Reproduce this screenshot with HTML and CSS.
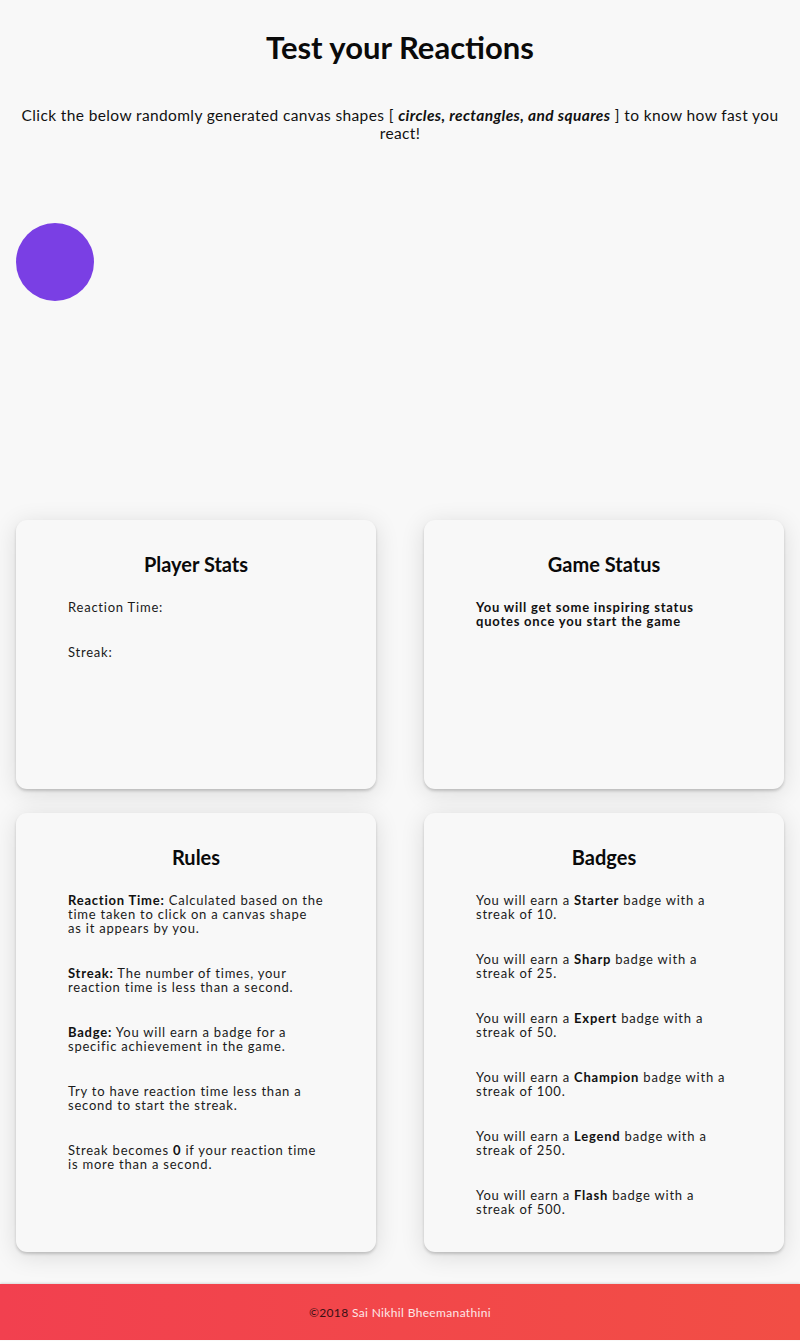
FILE: index.html
```html
<!DOCTYPE html>
<html lang="en">
<head>
<meta charset="utf-8">
<title>Test your Reactions</title>
<link rel="stylesheet" href="styles.css">
</head>
<body>
<header class="intro">
  <h1 class="intro__title">Test your Reactions</h1>
  <p class="intro__text">Click the below randomly generated canvas shapes [ <em>circles, rectangles, and squares</em> ] to know how fast you react!</p>
</header>

<section class="playfield">
  <div class="shape shape--circle"></div>
</section>

<main class="panels">
  <div class="panels__row panels__row--top">
    <article class="card">
      <h2 class="card__title">Player Stats</h2>
      <p class="card__text">Reaction Time:</p>
      <p class="card__text">Streak:</p>
    </article>
    <article class="card">
      <h2 class="card__title">Game Status</h2>
      <p class="card__text card__text--strong">You will get some inspiring status quotes once you start the game</p>
    </article>
  </div>
  <div class="panels__row">
    <article class="card">
      <h2 class="card__title">Rules</h2>
      <p class="card__text"><b>Reaction Time:</b> Calculated based on the time taken to click on a canvas shape as it appears by you.</p>
      <p class="card__text"><b>Streak:</b> The number of times, your reaction time is less than a second.</p>
      <p class="card__text"><b>Badge:</b> You will earn a badge for a specific achievement in the game.</p>
      <p class="card__text">Try to have reaction time less than a second to start the streak.</p>
      <p class="card__text">Streak becomes <b>0</b> if your reaction time is more than a second.</p>
    </article>
    <article class="card">
      <h2 class="card__title">Badges</h2>
      <p class="card__text">You will earn a <b>Starter</b> badge with a streak of 10.</p>
      <p class="card__text">You will earn a <b>Sharp</b> badge with a streak of 25.</p>
      <p class="card__text">You will earn a <b>Expert</b> badge with a streak of 50.</p>
      <p class="card__text">You will earn a <b>Champion</b> badge with a streak of 100.</p>
      <p class="card__text">You will earn a <b>Legend</b> badge with a streak of 250.</p>
      <p class="card__text">You will earn a <b>Flash</b> badge with a streak of 500.</p>
    </article>
  </div>
</main>

<footer class="footer">
  <span class="footer__copy">©2018</span>&nbsp;<span class="footer__name">Sai Nikhil Bheemanathini</span>
</footer>
</body>
</html>
```

FILE: styles.css
```css
* { box-sizing: border-box; }

html, body {
  margin: 0;
  padding: 0;
}

body {
  background: #f8f8f8;
  color: #1a1a1a;
  font-family: "Lato", "Noto Sans", sans-serif;
}

.intro {
  padding: 28px 16px 0;
  text-align: center;
}

.intro__title {
  margin: 0;
  font-size: 31px;
  line-height: 38px;
  font-weight: 700;
  color: #0a0a0a;
}

.intro__text {
  margin: 40px 0 0;
  font-size: 15.5px;
  line-height: 18px;
  letter-spacing: 0.38px;
  color: #111;
}

.intro__text em {
  font-weight: 700;
}

.playfield {
  position: relative;
  height: 378px;
}

.shape {
  position: absolute;
}

.shape--circle {
  left: 16px;
  top: 81px;
  width: 78px;
  height: 78px;
  border-radius: 50%;
  background: #7a3fe4;
}

.panels {
  display: flex;
  flex-direction: column;
  gap: 24px;
  padding: 0 16px;
}

.panels__row {
  display: grid;
  grid-template-columns: 1fr 1fr;
  gap: 48px;
}

.panels__row--top .card {
  min-height: 269px;
}

.card {
  display: flex;
  flex-direction: column;
  gap: 31px;
  padding: 30px 52px 36px;
  background: #f8f8f8;
  border-radius: 11px;
  box-shadow: 0 2px 3px rgba(0,0,0,0.18), 0 4px 24px rgba(0,0,0,0.12);
}

.card__title {
  margin: 0 0 -9px;
  font-size: 20px;
  line-height: 28px;
  font-weight: 700;
  text-align: center;
  color: #0a0a0a;
}

.card__text {
  margin: 0;
  font-size: 13px;
  line-height: 14px;
  letter-spacing: 0.78px;
  color: #1a1a1a;
}

.card__text b,
.card__text--strong {
  font-weight: 700;
  color: #111;
}

.footer {
  margin-top: 32px;
  height: 56px;
  display: flex;
  align-items: center;
  justify-content: center;
  background: linear-gradient(90deg, #f2404f, #f24e45);
  box-shadow: 0 -1px 2px rgba(0,0,0,0.12);
  font-size: 12px;
  letter-spacing: 0.35px;
}

.footer__copy {
  color: #3a1014;
}

.footer__name {
  color: #fde6e6;
}
```
